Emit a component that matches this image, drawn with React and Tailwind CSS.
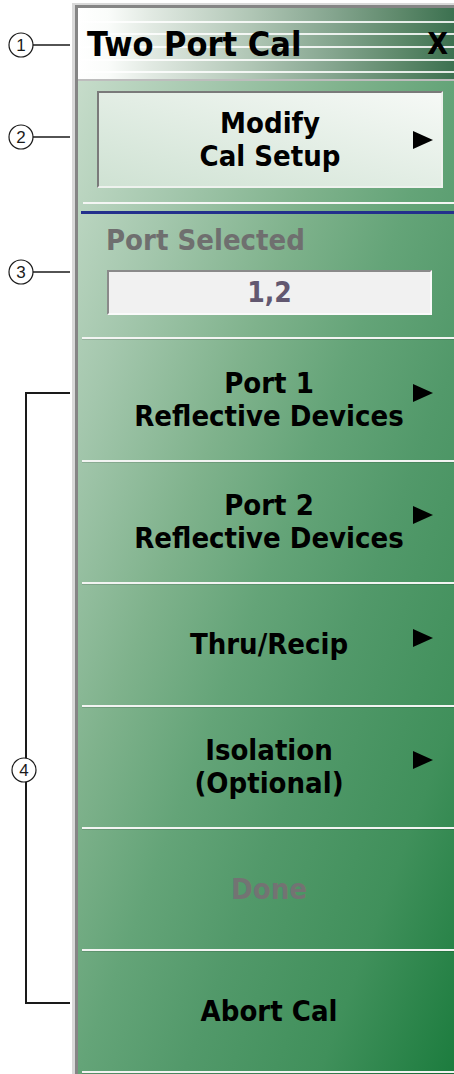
const font = "font-['DejaVu_Sans_Condensed','DejaVu_Sans',sans-serif]";

function Arrow() {
  return (
    <svg width="20" height="18" viewBox="0 0 20 18">
      <polygon points="0,0 20,9 0,18" fill="#000" />
    </svg>
  );
}

function Callouts() {
  const circles = [
    { n: '1', y: 45 },
    { n: '2', y: 137 },
    { n: '3', y: 272 },
  ];
  return (
    <svg width="72" height="1074" viewBox="0 0 72 1074">
      {circles.map((c) => (
        <g key={c.n}>
          <line x1="33" y1={c.y} x2="70" y2={c.y} stroke="#1a1a1a" strokeWidth="1.6" />
          <circle cx="21" cy={c.y} r="12" fill="#fff" stroke="#1a1a1a" strokeWidth="1.2" />
          <text
            x="21"
            y={c.y + 6}
            textAnchor="middle"
            fontFamily="Liberation Sans, Arial, sans-serif"
            fontSize="17"
            fill="#1a1a1a"
          >
            {c.n}
          </text>
        </g>
      ))}
      <polyline points="70,393 26,393 26,1003 70,1003" fill="none" stroke="#1a1a1a" strokeWidth="2" />
      <circle cx="24" cy="770" r="12" fill="#fff" stroke="#1a1a1a" strokeWidth="1.2" />
      <text x="24" y="776" textAnchor="middle" fontFamily="Liberation Sans, Arial, sans-serif" fontSize="17" fill="#1a1a1a">
        4
      </text>
    </svg>
  );
}

function Separator() {
  return <div className="ml-[4px] h-[2px] bg-[#f2f4f2] shadow-[0_1px_0_rgba(0,0,0,0.12)]" />;
}

const items = [
  { lines: ['Port 1', 'Reflective Devices'], arrow: true, h: 'h-[121px]' },
  { lines: ['Port 2', 'Reflective Devices'], arrow: true, h: 'h-[120px]' },
  { lines: ['Thru/Recip'], arrow: true, h: 'h-[121px]' },
  { lines: ['Isolation', '(Optional)'], arrow: true, h: 'h-[120px]' },
  { lines: ['Done'], disabled: true, h: 'h-[120px]' },
  { lines: ['Abort Cal'], h: 'h-[120px]' },
];

export default function App() {
  return (
    <div className={`flex w-[454px] h-[1074px] overflow-hidden bg-white ${font}`}>
      <div className="w-[72px] shrink-0">
        <Callouts />
      </div>

      <div className="flex-1 mt-[3px] border-t-[2px] border-l-[3px] border-[#d9d9d9]">
        <div className="h-full border-t-[3px] border-l-[3px] border-[#858585] flex flex-col">
          {/* title bar */}
          <div className="h-[73px] border-b-[2px] border-[#bdbdbd] bg-[linear-gradient(to_right,#ffffff_0%,#fafcfa_8%,#e2eae3_19%,#b0c6b5_46%,#86a690_67%,#5d886a_86%,#3c7150_100%)]">
            <div className="h-full flex items-center justify-between pl-[9px] pr-[6px] bg-[linear-gradient(to_bottom,transparent_13px,#ffffffd9_13px,#ffffffd9_15px,transparent_15px,transparent_25px,#ffffffd9_25px,#ffffffd9_27px,transparent_27px,transparent_38px,#ffffffd9_38px,#ffffffd9_40px,transparent_40px,transparent_51px,#ffffffd9_51px,#ffffffd9_53px,transparent_53px,transparent_63px,#ffffffd9_63px,#ffffffd9_65px,transparent_65px)]">
              <span className="text-[34px] font-bold text-black leading-none">Two Port Cal</span>
              <span className="text-[30px] font-bold text-black leading-none">X</span>
            </div>
          </div>

          {/* body */}
          <div className="flex-1 flex flex-col bg-[linear-gradient(to_bottom_right,#c6dcca_0%,#a4c7ad_18%,#7fb28c_36%,#64a478_50%,#52996a_64%,#40905b_82%,#1c7c3e_100%)]">
            <div className="mt-[10px] ml-[19px] w-[346px] h-[97px] relative flex items-center justify-center border-2 border-t-[#7a7a7a] border-l-[#7a7a7a] border-r-[#eef2ee] border-b-[#eef2ee] bg-[linear-gradient(to_top_right,#cfe2d3,#f6f9f6)]">
              <div className="text-center text-[29px] font-bold leading-[33px] text-black">
                <div>Modify</div>
                <div>Cal Setup</div>
              </div>
              <div className="absolute right-[8px] top-[38px]">
                <Arrow />
              </div>
            </div>

            <div className="mt-[14px] ml-[5px] h-[2px] bg-[#f4f6f4]" />
            <div className="mt-[7px] ml-[3px] h-[3px] bg-[#23308c]" />

            <div className="mt-[10px] pl-[28px] text-[29px] font-bold leading-[33px] text-[#6f6f6f]">Port Selected</div>

            <div className="mt-[13px] ml-[29px] w-[325px] h-[45px] flex items-center justify-center border-2 border-t-[#8a8a8a] border-l-[#8a8a8a] border-r-[#fafafa] border-b-[#fafafa] bg-[#f1f1f1]">
              <span className="text-[28px] font-bold leading-none text-[#625870]">1,2</span>
            </div>

            <div className="mt-[22px]">
              <Separator />
            </div>

            {items.map((it) => (
              <div key={it.lines.join()}>
                <div className={`${it.h} relative flex items-center justify-center pl-[6px]`}>
                  <div
                    className={`text-center text-[29px] font-bold leading-[33px] ${
                      it.disabled ? 'text-[#737373]' : 'text-black'
                    }`}
                  >
                    {it.lines.map((l) => (
                      <div key={l}>{l}</div>
                    ))}
                  </div>
                  {it.arrow && (
                    <div className="absolute right-[21px] top-1/2 -translate-y-[calc(50%+7px)]">
                      <Arrow />
                    </div>
                  )}
                </div>
                <Separator />
              </div>
            ))}
          </div>
        </div>
      </div>
    </div>
  );
}
